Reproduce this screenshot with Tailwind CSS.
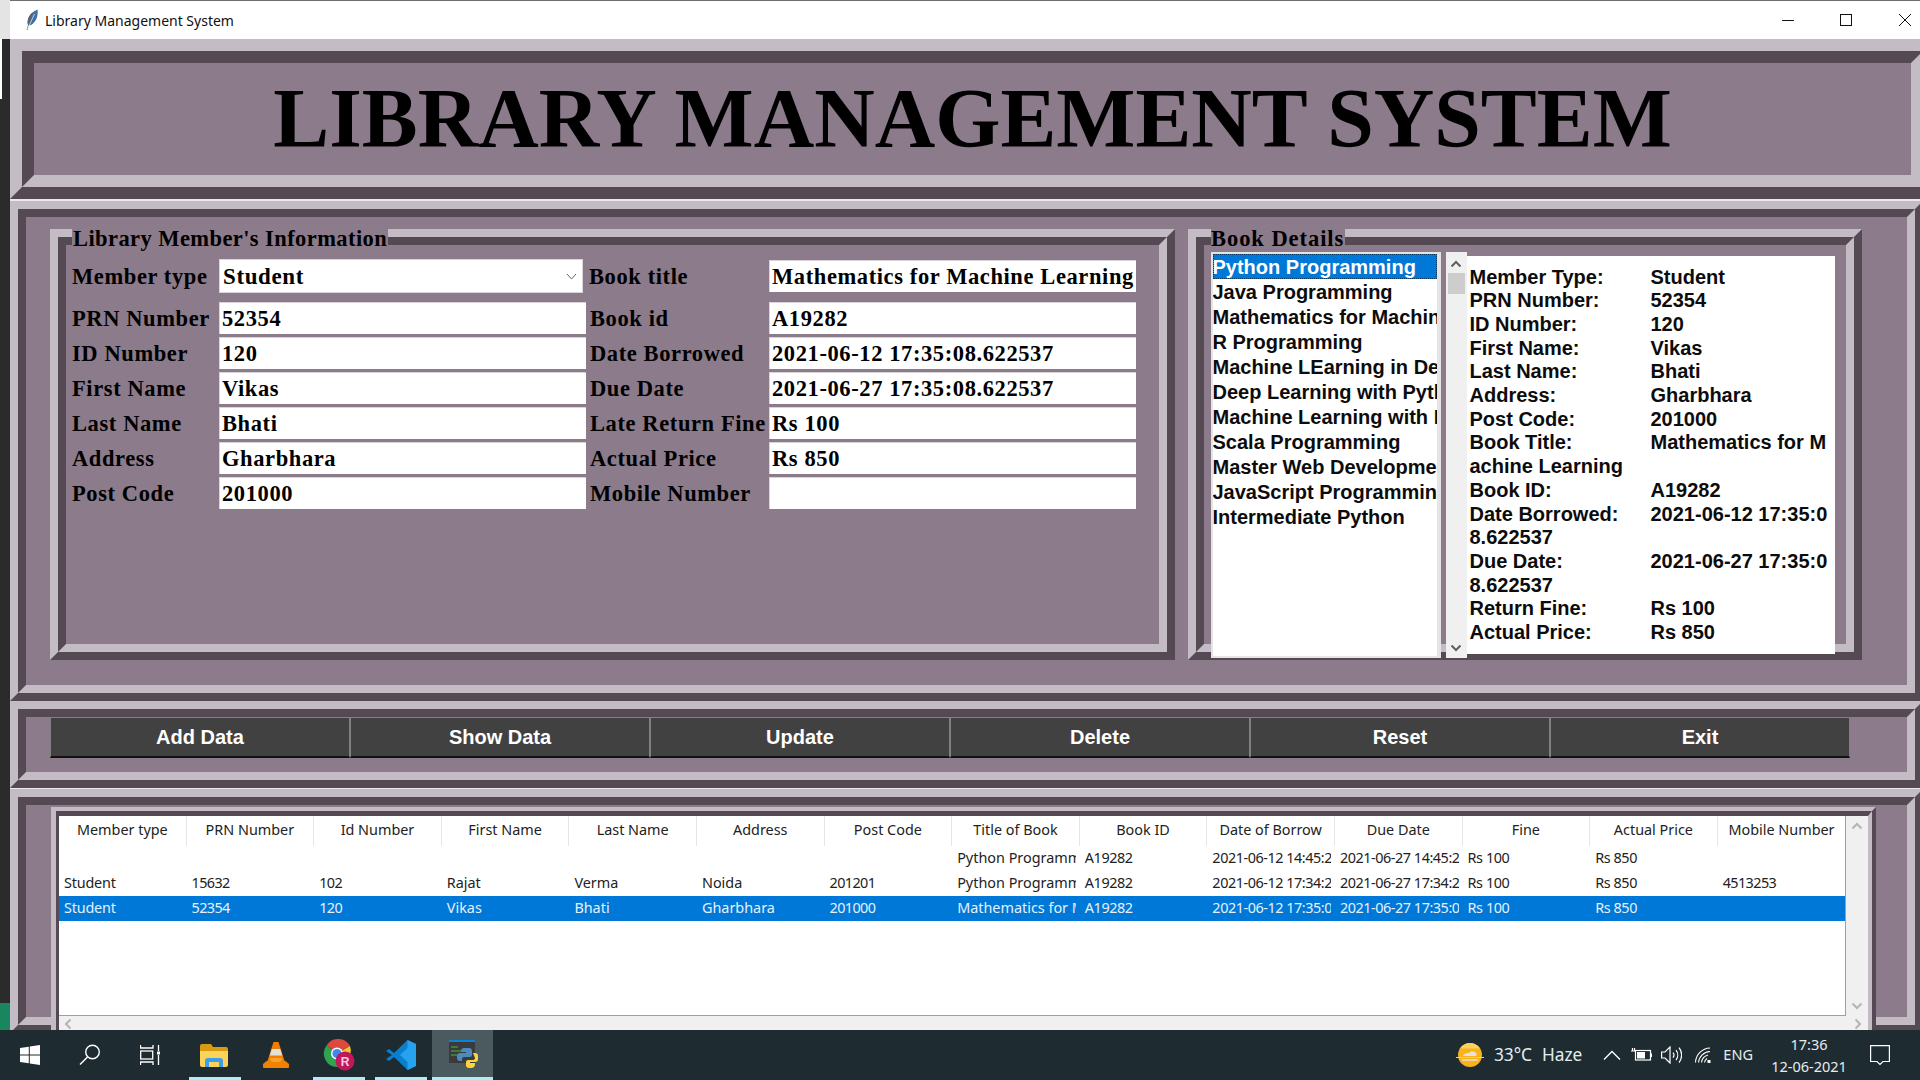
<html>
<head>
  <meta charset="utf-8">
  <title>Library Management System</title>
  <script src="https://cdn.jsdelivr.net/npm/@tailwindcss/browser@4"></script>
</head>
<body class="w-[1920px] h-[1080px] overflow-hidden bg-[#2b2b2b] font-['Liberation_Sans',sans-serif]">
  <div class="flex h-[1030px] overflow-hidden">
    <!-- desktop strip left of the window -->
    <div class="w-[10px] shrink-0 flex flex-col">
      <div class="h-[39px] bg-[#e4e4e4]"></div>
      <div class="h-[60px] w-[2px] bg-white"></div>
      <div class="flex-1"></div>
      <div class="h-[27px] bg-[#1a8660]"></div>
    </div>

    <!-- window -->
    <div class="w-[1910px] shrink-0 bg-[#ece8ec] overflow-hidden">
      <!-- title bar -->
      <div class="h-[39px] bg-white border-t border-[#6e6e6e] flex items-center font-['Noto_Sans',sans-serif] text-[14px] text-[#111]">
        <svg class="ml-[15px]" width="14" height="22" viewBox="0 0 14 22"><path d="M1.500 21L3 16C1.500 11 4 4 12.500 0.500C13.500 6 11.500 13 6 16L3.500 16.500L2.500 21Z" fill="#3f6fa8"/><path d="M3 16C2 11 4 6 8 3.500L4.500 15Z" fill="#59616b"/><path d="M2.500 20L9.500 5" stroke="#d8e4f0" stroke-width=".8" fill="none"/></svg>
        <span class="ml-[6px]">Library Management System</span>
        <div class="ml-auto flex items-center">
          <svg width="12" height="12" viewBox="0 0 12 12" class="mr-[46px]"><path d="M0 6.500H12" stroke="#111" stroke-width="1"/></svg>
          <svg width="12" height="12" viewBox="0 0 12 12" class="mr-[47px]"><rect x=".5" y=".5" width="11" height="11" fill="none" stroke="#111"/></svg>
          <svg width="12" height="12" viewBox="0 0 12 12" class="mr-[9px]"><path d="M0 0L12 12M12 0L0 12" stroke="#111" stroke-width="1"/></svg>
        </div>
      </div>

      <!-- heading frame -->
      <div class="w-[1925px] h-[160px] border-[12.5px] border-t-[#c4bcc4] border-l-[#c4bcc4] border-r-[#554a54] border-b-[#554a54]">
        <div class="h-full border-[12.5px] border-t-[#554a54] border-l-[#554a54] border-r-[#c4bcc4] border-b-[#c4bcc4] bg-[#8b7b8b] flex items-center justify-center">
          <h1 class="font-['Liberation_Serif',serif] font-bold text-[83.8px] leading-none text-black whitespace-nowrap">LIBRARY MANAGEMENT SYSTEM</h1>
        </div>
      </div>

      <!-- form frame -->
      <div class="mt-[2px] w-[1913px] h-[500px] border-[8px] border-t-[#c4bcc4] border-l-[#c4bcc4] border-r-[#554a54] border-b-[#554a54]">
        <div class="h-full border-[8px] border-t-[#554a54] border-l-[#554a54] border-r-[#c4bcc4] border-b-[#c4bcc4] bg-[#8b7b8b] flex pl-[24px] pt-[12px]">
          <!-- member group -->
          <div class="relative w-[1125px] h-[431px] shrink-0 border-[8.5px] border-t-[#c4bcc4] border-l-[#c4bcc4] border-r-[#554a54] border-b-[#554a54]">
            <div class="h-full border-[8.5px] border-t-[#554a54] border-l-[#554a54] border-r-[#c4bcc4] border-b-[#c4bcc4] pt-[14px] pl-[6px] font-['Liberation_Serif',serif] font-bold text-[22.5px] tracking-[0.6px] text-black">
              <div class="flex h-[43px]">
                <div class="w-[147px] h-[36px] flex items-center whitespace-nowrap">Member type</div>
                <div class="w-[364px] h-[34px] bg-white border border-[#d9d4d9] flex items-center pl-[3px] justify-between pr-[5px]"><span class="text-[23px] pt-[2px]">Student</span><svg width="11" height="7" viewBox="0 0 11 7"><path d="M1 1L5.500 6L10 1" fill="none" stroke="#666" stroke-width="1"/></svg></div>
                <div class="w-[186px] h-[36px] pl-[6px] flex items-center whitespace-nowrap">Book title</div>
                <div class="w-[367px] h-[32px] mt-[1px] bg-white border-t border-l border-[#d9d4d9] pl-[2px] flex items-center whitespace-nowrap overflow-hidden">Mathematics for Machine Learning</div>
              </div>
              <div class="flex h-[35px]">
                <div class="w-[147px] h-[34px] flex items-center whitespace-nowrap">PRN Number</div>
                <div class="w-[367px] h-[32px] bg-white border-t border-l border-[#d9d4d9] pl-[2px] flex items-center">52354</div>
                <div class="w-[183px] h-[34px] pl-[4px] flex items-center whitespace-nowrap">Book id</div>
                <div class="w-[367px] h-[32px] bg-white border-t border-l border-[#d9d4d9] pl-[2px] flex items-center">A19282</div>
              </div>
              <div class="flex h-[35px]">
                <div class="w-[147px] h-[34px] flex items-center whitespace-nowrap">ID Number</div>
                <div class="w-[367px] h-[32px] bg-white border-t border-l border-[#d9d4d9] pl-[2px] flex items-center">120</div>
                <div class="w-[183px] h-[34px] pl-[4px] flex items-center whitespace-nowrap">Date Borrowed</div>
                <div class="w-[367px] h-[32px] bg-white border-t border-l border-[#d9d4d9] pl-[2px] flex items-center">2021-06-12 17:35:08.622537</div>
              </div>
              <div class="flex h-[35px]">
                <div class="w-[147px] h-[34px] flex items-center whitespace-nowrap">First Name</div>
                <div class="w-[367px] h-[32px] bg-white border-t border-l border-[#d9d4d9] pl-[2px] flex items-center">Vikas</div>
                <div class="w-[183px] h-[34px] pl-[4px] flex items-center whitespace-nowrap">Due Date</div>
                <div class="w-[367px] h-[32px] bg-white border-t border-l border-[#d9d4d9] pl-[2px] flex items-center">2021-06-27 17:35:08.622537</div>
              </div>
              <div class="flex h-[35px]">
                <div class="w-[147px] h-[34px] flex items-center whitespace-nowrap">Last Name</div>
                <div class="w-[367px] h-[32px] bg-white border-t border-l border-[#d9d4d9] pl-[2px] flex items-center">Bhati</div>
                <div class="w-[183px] h-[34px] pl-[4px] flex items-center whitespace-nowrap">Late Return Fine</div>
                <div class="w-[367px] h-[32px] bg-white border-t border-l border-[#d9d4d9] pl-[2px] flex items-center">Rs 100</div>
              </div>
              <div class="flex h-[35px]">
                <div class="w-[147px] h-[34px] flex items-center whitespace-nowrap">Address</div>
                <div class="w-[367px] h-[32px] bg-white border-t border-l border-[#d9d4d9] pl-[2px] flex items-center">Gharbhara</div>
                <div class="w-[183px] h-[34px] pl-[4px] flex items-center whitespace-nowrap">Actual Price</div>
                <div class="w-[367px] h-[32px] bg-white border-t border-l border-[#d9d4d9] pl-[2px] flex items-center">Rs 850</div>
              </div>
              <div class="flex h-[35px]">
                <div class="w-[147px] h-[34px] flex items-center whitespace-nowrap">Post Code</div>
                <div class="w-[367px] h-[32px] bg-white border-t border-l border-[#d9d4d9] pl-[2px] flex items-center">201000</div>
                <div class="w-[183px] h-[34px] pl-[4px] flex items-center whitespace-nowrap">Mobile Number</div>
                <div class="w-[367px] h-[32px] bg-white border-t border-l border-[#d9d4d9]"></div>
              </div>
            </div>
            <div class="absolute left-[14px] top-[-8.5px] h-[21px] bg-[#8b7b8b] pl-[1px] pr-[1px] flex items-center font-['Liberation_Serif',serif] font-bold text-[22.5px] tracking-[0.42px] text-black whitespace-nowrap">Library Member's Information</div>
          </div>

          <!-- book group -->
          <div class="relative ml-[13px] w-[674px] h-[431px] shrink-0 border-[8.5px] border-t-[#c4bcc4] border-l-[#c4bcc4] border-r-[#554a54] border-b-[#554a54]">
            <div class="h-full border-[8.5px] border-t-[#554a54] border-l-[#554a54] border-r-[#c4bcc4] border-b-[#c4bcc4]"></div>
            <div class="absolute left-[15px] top-[-8.5px] h-[21px] bg-[#8b7b8b] pr-[1px] flex items-center font-['Liberation_Serif',serif] font-bold text-[22.5px] tracking-[0.95px] text-black whitespace-nowrap">Book Details</div>
            <!-- list, scrollbar and receipt sit on the group's border -->
            <div class="absolute left-[14.5px] top-[15px] flex items-start font-bold text-[20px] text-[#0c0c0c]">
              <div class="w-[230px] h-[406px] bg-white border-2 border-r-4 border-[#e4e4e4] overflow-hidden whitespace-nowrap leading-[26px]">
                <div class="h-[25px] w-[224px] bg-[#0078d7] text-white outline-1 outline-dotted outline-offset-[-1px] outline-[#0a3a66]">Python Programming</div>
                <div class="h-[25px]">Java Programming</div>
                <div class="h-[25px]">Mathematics for Machine Learning</div>
                <div class="h-[25px]">R Programming</div>
                <div class="h-[25px]">Machine LEarning in Depth</div>
                <div class="h-[25px]">Deep Learning with Python</div>
                <div class="h-[25px]">Machine Learning with Python</div>
                <div class="h-[25px]">Scala Programming</div>
                <div class="h-[25px]">Master Web Development</div>
                <div class="h-[25px]">JavaScript Programming</div>
                <div class="h-[25px]">Intermediate Python</div>
              </div>
              <div class="ml-[5px] w-[21px] h-[406px] bg-[#f0f0f0] flex flex-col items-center justify-between pt-[8px] pb-[6px] relative">
                <svg width="12" height="8" viewBox="0 0 12 8"><path d="M1.500 6.500L6 2L10.500 6.500" fill="none" stroke="#606060" stroke-width="2"/></svg>
                <div class="absolute left-[2px] top-[21px] w-[17px] h-[21px] bg-[#cdcdcd]"></div>
                <svg width="12" height="8" viewBox="0 0 12 8"><path d="M1.500 1.500L6 6L10.500 1.500" fill="none" stroke="#606060" stroke-width="2"/></svg>
              </div>
              <div class="mt-[4px] w-[368px] h-[398px] bg-white pt-[9.5px] pl-[3px] leading-[23.7px] whitespace-nowrap grid grid-cols-[181px_1fr] content-start">
                <div>Member Type:</div><div>Student</div>
                <div>PRN Number:</div><div>52354</div>
                <div>ID Number:</div><div>120</div>
                <div>First Name:</div><div>Vikas</div>
                <div>Last Name:</div><div>Bhati</div>
                <div>Address:</div><div>Gharbhara</div>
                <div>Post Code:</div><div>201000</div>
                <div>Book Title:</div><div>Mathematics for M</div>
                <div class="col-span-2">achine Learning</div>
                <div>Book ID:</div><div>A19282</div>
                <div>Date Borrowed:</div><div>2021-06-12 17:35:0</div>
                <div class="col-span-2">8.622537</div>
                <div>Due Date:</div><div>2021-06-27 17:35:0</div>
                <div class="col-span-2">8.622537</div>
                <div>Return Fine:</div><div>Rs 100</div>
                <div>Actual Price:</div><div>Rs 850</div>
              </div>
            </div>
          </div>
        </div>
      </div>

      <!-- buttons frame -->
      <div class="w-[1913px] h-[87px] border-[8px] border-t-[#c4bcc4] border-l-[#c4bcc4] border-r-[#554a54] border-b-[#554a54]">
        <div class="h-full border-[8px] border-t-[#554a54] border-l-[#554a54] border-r-[#c4bcc4] border-b-[#c4bcc4] bg-[#8b7b8b] pl-[24px] flex items-start">
          <div class="flex font-bold text-[20px] text-white">
            <button class="w-[300px] h-[41px] bg-[#414141] border-t border-l border-r border-[#808080] border-b-2 border-b-[#111]">Add Data</button>
            <button class="w-[300px] h-[41px] bg-[#414141] border-t border-l border-r border-[#808080] border-b-2 border-b-[#111]">Show Data</button>
            <button class="w-[300px] h-[41px] bg-[#414141] border-t border-l border-r border-[#808080] border-b-2 border-b-[#111]">Update</button>
            <button class="w-[300px] h-[41px] bg-[#414141] border-t border-l border-r border-[#808080] border-b-2 border-b-[#111]">Delete</button>
            <button class="w-[300px] h-[41px] bg-[#414141] border-t border-l border-r border-[#808080] border-b-2 border-b-[#111]">Reset</button>
            <button class="w-[300px] h-[41px] bg-[#414141] border-t border-l border-r border-[#808080] border-b-2 border-b-[#111]">Exit</button>
          </div>
        </div>
      </div>

      <!-- records frame -->
      <div class="mt-[1px] w-[1913px] h-[244px] border-[8px] border-t-[#c4bcc4] border-l-[#c4bcc4] border-r-[#554a54] border-b-[#554a54]">
        <div class="h-full border-[8px] border-t-[#554a54] border-l-[#554a54] border-r-[#c4bcc4] border-b-[#c4bcc4] bg-[#8b7b8b] pl-[25px] pt-[2px]">
          <div class="w-[1825px] h-[240px] border-t-[4px] border-l-[5px] border-r-[4px] border-t-[#c4bcc4] border-l-[#c4bcc4] border-r-[#554a54]">
            <div class="h-full border-t-[5px] border-l-[3px] border-r-[4px] border-t-[#554a54] border-l-[#554a54] border-r-[#c4bcc4] font-['Noto_Sans',sans-serif] text-[14.4px] text-[#222]">
              <div class="flex h-[200px]">
                <div class="w-[1787px] shrink-0 bg-white border-r border-b border-[#a0a0a0] overflow-hidden">
                  <div class="grid grid-cols-[repeat(14,127.6px)] h-[30px] text-center leading-[28px] whitespace-nowrap">
                    <div class="border-r border-[#e5e5e5]">Member type</div>
                    <div class="border-r border-[#e5e5e5]">PRN Number</div>
                    <div class="border-r border-[#e5e5e5]">Id Number</div>
                    <div class="border-r border-[#e5e5e5]">First Name</div>
                    <div class="border-r border-[#e5e5e5]">Last Name</div>
                    <div class="border-r border-[#e5e5e5]">Address</div>
                    <div class="border-r border-[#e5e5e5]">Post Code</div>
                    <div class="border-r border-[#e5e5e5]">Title of Book</div>
                    <div class="border-r border-[#e5e5e5]">Book ID</div>
                    <div class="border-r border-[#e5e5e5]">Date of Borrow</div>
                    <div class="border-r border-[#e5e5e5]">Due Date</div>
                    <div class="border-r border-[#e5e5e5]">Fine</div>
                    <div class="border-r border-[#e5e5e5]">Actual Price</div>
                    <div>Mobile Number</div>
                  </div>
                  <div class="grid grid-cols-[repeat(14,127.6px)] h-[25px] leading-[23px] whitespace-nowrap">
                    <div></div><div></div><div></div><div></div><div></div><div></div><div></div>
                    <div class="pl-[5px] mr-[4px] overflow-hidden">Python Programming</div>
                    <div class="pl-[5px] mr-[4px] overflow-hidden tracking-[-0.4px]">A19282</div>
                    <div class="pl-[5px] mr-[4px] overflow-hidden tracking-[-0.45px]">2021-06-12 14:45:23.123456</div>
                    <div class="pl-[5px] mr-[4px] overflow-hidden tracking-[-0.45px]">2021-06-27 14:45:23.123456</div>
                    <div class="pl-[5px] mr-[4px] overflow-hidden tracking-[-0.4px]">Rs 100</div>
                    <div class="pl-[5px] mr-[4px] overflow-hidden tracking-[-0.4px]">Rs 850</div>
                    <div></div>
                  </div>
                  <div class="grid grid-cols-[repeat(14,127.6px)] h-[25px] leading-[23px] whitespace-nowrap">
                    <div class="pl-[5px] mr-[4px] overflow-hidden tracking-[-0.2px]">Student</div>
                    <div class="pl-[5px] mr-[4px] overflow-hidden tracking-[-0.6px]">15632</div>
                    <div class="pl-[5px] mr-[4px] overflow-hidden tracking-[-0.6px]">102</div>
                    <div class="pl-[5px] mr-[4px] overflow-hidden">Rajat</div>
                    <div class="pl-[5px] mr-[4px] overflow-hidden">Verma</div>
                    <div class="pl-[5px] mr-[4px] overflow-hidden">Noida</div>
                    <div class="pl-[5px] mr-[4px] overflow-hidden tracking-[-0.6px]">201201</div>
                    <div class="pl-[5px] mr-[4px] overflow-hidden">Python Programming</div>
                    <div class="pl-[5px] mr-[4px] overflow-hidden tracking-[-0.4px]">A19282</div>
                    <div class="pl-[5px] mr-[4px] overflow-hidden tracking-[-0.45px]">2021-06-12 17:34:23.123456</div>
                    <div class="pl-[5px] mr-[4px] overflow-hidden tracking-[-0.45px]">2021-06-27 17:34:23.123456</div>
                    <div class="pl-[5px] mr-[4px] overflow-hidden tracking-[-0.4px]">Rs 100</div>
                    <div class="pl-[5px] mr-[4px] overflow-hidden tracking-[-0.4px]">Rs 850</div>
                    <div class="pl-[5px] mr-[4px] overflow-hidden tracking-[-0.6px]">4513253</div>
                  </div>
                  <div class="grid grid-cols-[repeat(14,127.6px)] h-[25px] leading-[23px] whitespace-nowrap bg-[#0078d7] text-[#e6f1fb]">
                    <div class="pl-[5px] mr-[4px] overflow-hidden tracking-[-0.2px]">Student</div>
                    <div class="pl-[5px] mr-[4px] overflow-hidden tracking-[-0.6px]">52354</div>
                    <div class="pl-[5px] mr-[4px] overflow-hidden tracking-[-0.6px]">120</div>
                    <div class="pl-[5px] mr-[4px] overflow-hidden">Vikas</div>
                    <div class="pl-[5px] mr-[4px] overflow-hidden">Bhati</div>
                    <div class="pl-[5px] mr-[4px] overflow-hidden">Gharbhara</div>
                    <div class="pl-[5px] mr-[4px] overflow-hidden tracking-[-0.6px]">201000</div>
                    <div class="pl-[5px] mr-[4px] overflow-hidden">Mathematics for Machine Learning</div>
                    <div class="pl-[5px] mr-[4px] overflow-hidden tracking-[-0.4px]">A19282</div>
                    <div class="pl-[5px] mr-[4px] overflow-hidden tracking-[-0.45px]">2021-06-12 17:35:08.622537</div>
                    <div class="pl-[5px] mr-[4px] overflow-hidden tracking-[-0.45px]">2021-06-27 17:35:08.622537</div>
                    <div class="pl-[5px] mr-[4px] overflow-hidden tracking-[-0.4px]">Rs 100</div>
                    <div class="pl-[5px] mr-[4px] overflow-hidden tracking-[-0.4px]">Rs 850</div>
                    <div></div>
                  </div>
                </div>
                <div class="w-[22px] bg-[#f0f0f0] flex flex-col items-center justify-between pt-[6px] pb-[6px]">
                  <svg width="12" height="8" viewBox="0 0 12 8"><path d="M1.500 6.500L6 2L10.500 6.500" fill="none" stroke="#b4b4b4" stroke-width="2"/></svg>
                  <svg width="12" height="8" viewBox="0 0 12 8"><path d="M1.500 1.500L6 6L10.500 1.500" fill="none" stroke="#b4b4b4" stroke-width="2"/></svg>
                </div>
              </div>
              <div class="h-[16px] bg-[#f0f0f0] flex justify-between items-center pl-[5px] pr-[6px]">
                <svg width="8" height="12" viewBox="0 0 8 12"><path d="M6.500 1.500L2 6L6.500 10.500" fill="none" stroke="#b4b4b4" stroke-width="2"/></svg>
                <svg width="8" height="12" viewBox="0 0 8 12"><path d="M1.500 1.500L6 6L1.500 10.500" fill="none" stroke="#b4b4b4" stroke-width="2"/></svg>
              </div>
            </div>
          </div>
        </div>
      </div>
    </div>
  </div>

  <!-- taskbar -->
  <div class="h-[50px] bg-[#1e2c32] flex items-center text-[#e6ecee] font-['Noto_Sans',sans-serif]">
    <div class="w-[60px] h-full flex items-center justify-center">
      <svg width="20" height="20" viewBox="0 0 20 20" fill="#fff"><path d="M0 3L8.800 1.800V9.500H0ZM9.800 1.600L20 0V9.500H9.800ZM0 10.500H8.800V18.200L0 17ZM9.800 10.500H20V20L9.800 18.400Z"/></svg>
    </div>
    <div class="w-[60px] h-full flex items-center justify-center">
      <svg width="22" height="22" viewBox="0 0 22 22" fill="none" stroke="#fff" stroke-width="1.400"><circle cx="13.500" cy="8" r="6.800"/><path d="M8.500 13L1 20.500"/></svg>
    </div>
    <div class="w-[60px] h-full flex items-center justify-center">
      <svg width="20" height="20" viewBox="0 0 20 20" fill="none" stroke="#fff" stroke-width="1.300"><path d="M0.500 0V3H13V0M0.500 20V17H13V20"/><rect x="0.700" y="6" width="12" height="8"/><path d="M18.500 0V6M18.500 10V20"/><rect x="17" y="6.500" width="3" height="3" fill="#fff" stroke="none"/></svg>
    </div>
    <div class="w-[4px]"></div>
    <div class="w-[62px] h-full relative flex items-center justify-center">
      <svg class="mr-[2px]" width="28" height="24" viewBox="0 0 28 24"><path d="M0 3a2 2 0 0 1 2-2h9l2 3h13a2 2 0 0 1 2 2v14a2 2 0 0 1-2 2H2a2 2 0 0 1-2-2Z" fill="#d99a13"/><path d="M0 8h28v14a2 2 0 0 1-2 2H2a2 2 0 0 1-2-2Z" fill="#fbd35a"/><path d="M5 24v-6a3 3 0 0 1 3-3h12a3 3 0 0 1 3 3v6h-4v-5H9v5Z" fill="#3f9ee8"/></svg>
      <div class="absolute left-[5px] right-[5px] bottom-0 h-[3px] bg-[#a8eefb]"></div>
    </div>
    <div class="w-[62px] h-full flex items-center justify-center">
      <svg class="mr-[2px]" width="26" height="28" viewBox="0 0 26 28"><path d="M10.500 1h5l7 22H3.500Z" fill="#f47c00"/><path d="M8.800 8h8.400l2 6.500H6.800Z" fill="#e4e0da"/><path d="M0 23l3.500-3h19l3.500 3v3a1 1 0 0 1-1 1H1a1 1 0 0 1-1-1Z" fill="#f08200"/><path d="M7 19a6 2 0 0 0 12 0v-2H7Z" fill="#f9a02c"/></svg>
    </div>
    <div class="w-[62px] h-full relative flex items-center justify-center">
      <svg width="32" height="32" viewBox="0 0 32 32">
        <path d="M14 14L3.600 6.500A13.500 13.500 0 0 1 27 7Z" fill="#dc4a3d"/>
        <path d="M14 14.500L27 7A13.500 13.500 0 0 1 27.500 14.500Z" fill="#f4c430"/>
        <path d="M3.500 6.500A13.500 13.500 0 0 0 14 28L14 14.500Z" fill="#2da44e"/>
        <path d="M14 14.500L27.500 14.500A13.500 13.500 0 0 1 14 28Z" fill="#2da44e"/>
        <circle cx="14" cy="14.500" r="6" fill="#fff"/><circle cx="14" cy="14.500" r="4.600" fill="#3f86ee"/>
        <circle cx="22" cy="22" r="9.500" fill="#c2185b"/>
        <text x="22" y="26.500" text-anchor="middle" font-family="Liberation Sans" font-weight="700" font-size="12" fill="#f4cfe0">R</text>
      </svg>
      <div class="absolute left-[5px] right-[5px] bottom-0 h-[3px] bg-[#a8eefb]"></div>
    </div>
    <div class="w-[62px] h-full relative flex items-center justify-center">
      <svg width="30" height="30" viewBox="0 0 30 30"><path d="M21.500 0L30 4V26L21.500 30L8 17L3 21L0 19L6 15L0 11L3 9L8 13Z" fill="#0a7fd0"/><path d="M21.500 0L30 4V26L21.500 30ZM21.500 8L14 15L21.500 22Z" fill="#27a2ee" fill-rule="evenodd"/></svg>
      <div class="absolute left-[5px] right-[5px] bottom-0 h-[3px] bg-[#a8eefb]"></div>
    </div>
    <div class="w-[61px] h-full relative flex items-center justify-center bg-[#4b5a5f]">
      <svg class="ml-[3px]" width="30" height="30" viewBox="0 0 30 30">
        <rect x="0" y="1" width="26" height="22" fill="#3a3a3a"/><rect x="0" y="0" width="26" height="2" fill="#0a84d8"/>
        <path d="M2 7h7M2 11h10M2 15h6" stroke="#4caf50" stroke-width="1.200"/>
        <path d="M15 8h5a3 3 0 0 1 3 3v4a2 2 0 0 1-2 2h-6a2 2 0 0 0-2 2v2h-2a3 3 0 0 1-3-3v-2a3 3 0 0 1 3-3h6v-1h-5v-1a3 3 0 0 1 3-3Z" fill="#4b8bbe"/>
        <path d="M24 13h2a3 3 0 0 1 3 3v3a3 3 0 0 1-3 3h-5v1h5v1a4 4 0 0 1-4 4h-2a3 3 0 0 1-3-3v-3a2 2 0 0 1 2-2h5a2 2 0 0 0 2-2Z" fill="#ffd43b"/>
      </svg>
      <div class="absolute inset-x-0 bottom-0 h-[3px] bg-[#a8eefb]"></div>
    </div>

    <!-- tray -->
    <div class="ml-auto flex items-center h-full">
      <svg width="28" height="26" viewBox="0 0 28 26"><circle cx="14" cy="13" r="12" fill="#f7b21c"/><path d="M14 1a12 12 0 0 1 10 5.500H4A12 12 0 0 1 14 1Z" fill="#fbd25d"/><path d="M0 15.500H28" stroke="#d9d2c0" stroke-width="1"/><path d="M7 14a5 3 0 0 1 6-3 4 3 0 0 1 7 3Z" fill="#e8e2d4"/><path d="M6 18H22" stroke="#e8e2d4" stroke-width="1.500"/></svg>
      <span class="ml-[10px] text-[17.3px]">33°C</span>
      <span class="ml-[10px] text-[17.3px]">Haze</span>
      <svg class="ml-[21px]" width="18" height="10" viewBox="0 0 18 10" fill="none" stroke="#fff" stroke-width="1.300"><path d="M1 9.500L9 1.500L17 9.500"/></svg>
      <svg class="ml-[10px]" width="21" height="14" viewBox="0 0 21 14" fill="none" stroke="#fff" stroke-width="1.200"><rect x="4.500" y="2.500" width="15" height="9.500"/><rect x="6" y="4" width="8" height="6.500" fill="#fff" stroke="none"/><path d="M20.500 5.500V9M0 3h5M1.500 0v3M3.500 0v3"/></svg>
      <svg class="ml-[9px]" width="21" height="18" viewBox="0 0 21 18" fill="none" stroke="#fff" stroke-width="1.200"><path d="M0.600 6H4L9 1V17L4 12H0.600Z"/><path d="M12 6.500a4 4 0 0 1 0 5M15 4a8 8 0 0 1 0 10M18 1.500a12 12 0 0 1 0 15"/></svg>
      <svg class="ml-[13px]" width="16" height="16" viewBox="0 0 16 16" fill="none" stroke="#fff" stroke-width="1.100"><path d="M0.500 15.500A15 15 0 0 1 15 1M3.500 15.500A12 12 0 0 1 15 4.500M6.500 15.500A9 9 0 0 1 13 8M9.500 15.500A6 6 0 0 1 12 11.500"/><rect x="12.500" y="13" width="3" height="3" fill="#fff" stroke="none"/></svg>
      <span class="ml-[12px] text-[14.5px]">ENG</span>
      <div class="ml-[16px] w-[80px] flex flex-col items-center text-[14.5px] leading-[22px]">
        <span>17:36</span>
        <span>12-06-2021</span>
      </div>
      <svg class="ml-[21px] mr-[30px]" width="20" height="21" viewBox="0 0 20 21" fill="none" stroke="#fff" stroke-width="1.200"><path d="M0.600 0.600H19.400V16.500H13L10 19.500L7 16.500H0.600Z"/></svg>
    </div>
  </div>
</body>
</html>
